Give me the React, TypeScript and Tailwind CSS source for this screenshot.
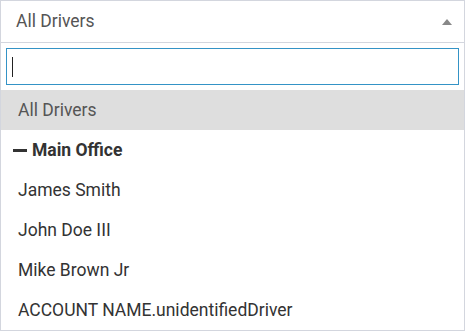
import React from "react";

export default function App() {
  const items = ["James Smith", "John Doe III", "Mike Brown Jr", "ACCOUNT NAME.unidentifiedDriver"];
  return (
    <div className="w-[465px] h-[331px] bg-white" style={{ fontFamily: "Roboto, 'Noto Sans', sans-serif" }}>
      <div className="h-[331px] border border-[#d3d6de] flex flex-col">
        <div className="h-[42px] shrink-0 flex items-center justify-between pl-[15px] pr-[12px] border-b border-[#d3d6de] text-[17.5px] text-[#555]">
          <span>All Drivers</span>
          <svg width="10" height="6" viewBox="0 0 10 6"><path d="M0 6 L5 0 L10 6 Z" fill="#888" /></svg>
        </div>
        <div className="px-[5px] pt-[5px] pb-[5px] shrink-0">
          <div className="h-[37px] border border-[#3493c6] flex items-center pl-[5px]">
            <div className="w-[1px] h-[20px] bg-[#222]" />
          </div>
        </div>
        <div className="h-[40px] shrink-0 bg-[#dedede] flex items-center pl-[17px] text-[17.5px] text-[#555]">All Drivers</div>
        <div className="h-[40px] shrink-0 flex items-center pl-[12px] text-[17.5px] font-bold text-[#333]">
          <span className="inline-block w-[14px] h-[3px] bg-[#333] mr-[5px]" />
          <span>Main Office</span>
        </div>
        {items.map((t) => (
          <div key={t} className="h-[40px] shrink-0 flex items-center pl-[17px] text-[17.5px] text-[#333]">{t}</div>
        ))}
      </div>
    </div>
  );
}
